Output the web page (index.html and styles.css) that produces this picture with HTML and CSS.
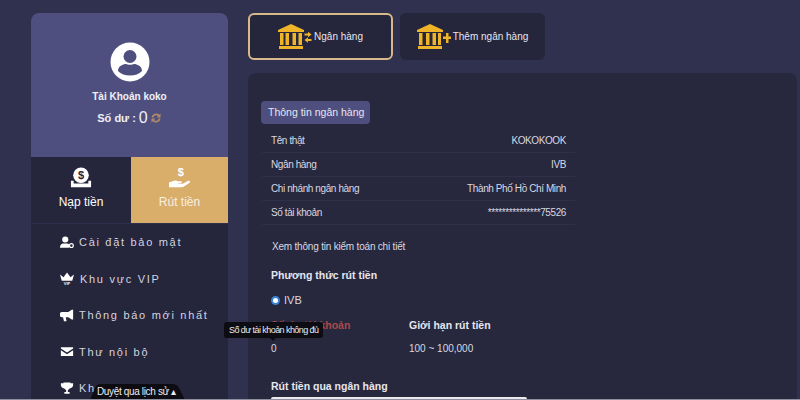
FILE: index.html
```html
<!DOCTYPE html>
<html lang="en">
<head>
    <meta charset="UTF-8">
    <meta name="viewport" content="width=device-width, initial-scale=1.0">
    <title>Rút tiền</title>
    <link rel="stylesheet" href="styles.css">
</head>
<body>
    <div class="page">
        <!-- Left column -->
        <aside class="sidebar">
            <div class="profile">
                <svg class="avatar" viewBox="0 0 40 40">
                    <circle cx="20" cy="20" r="19.500" fill="#fff"/>
                    <circle cx="20" cy="14.500" r="6.500" fill="#4f4f7f"/>
                    <path d="M8 29c0-5 5-7 8-7 1.500 1 6.500 1 8 0 3 0 8 2 8 7-3 3-7 4.500-12 4.500S11 32 8 29z" fill="#4f4f7f"/>
                </svg>
                <div class="profile-name">Tài Khoản koko</div>
                <div class="balance">Số dư : <span class="balance-num">0</span>
                    <svg class="refresh" viewBox="0 0 12 12">
                        <path d="M1.500 5.500a4.500 4.500 0 0 1 7.700-2.700L10.500 1.500v4h-4L8 4a2.600 2.600 0 0 0-4.500 1.500zM10.500 6.500a4.500 4.500 0 0 1-7.700 2.700L1.500 10.500v-4h4L4 8a2.600 2.600 0 0 0 4.500-1.500z" fill="#b08a68"/>
                    </svg>
                </div>
            </div>
            <div class="money-tabs">
                <div class="money-tab">
                    <svg class="money-icon" viewBox="0 0 24 24">
                        <circle cx="12" cy="9" r="8.500" fill="#fff"/>
                        <path d="M1 15h3v3h16v-3h3v7H1z" fill="#fff"/>
                        <text x="12" y="13.500" class="money-sign money-sign-dark">$</text>
                    </svg>
                    <span>Nạp tiền</span>
                </div>
                <div class="money-tab money-tab-active">
                    <svg class="money-icon" viewBox="0 0 24 24">
                        <text x="13" y="10" class="money-sign">$</text>
                        <path d="M0 22v-5l4-1.500c2-1 4-1 5.500 0H13c1.300 0 1.300 2.300 0 2.300h-3v.5h5l6-3.300c1.600-.6 2.800 1 1.500 2.200L16 21.500c-.6.300-1.200.5-2 .5z" fill="#fff"/>
                    </svg>
                    <span>Rút tiền</span>
                </div>
            </div>
            <nav class="menu">
                <div class="menu-item">
                    <svg class="menu-icon" viewBox="0 0 16 14">
                        <circle cx="6" cy="3.500" r="3.500" fill="#fff"/>
                        <path d="M0 13c0-4 2-5 4-5h4c1 0 2 .5 2.500 1.500V13z" fill="#fff"/>
                        <circle cx="13" cy="10.500" r="2.200" fill="none" stroke="#fff" stroke-width="1.400"/>
                    </svg>
                    <span>Cài đặt bảo mật</span>
                </div>
                <div class="menu-item menu-item-wide">
                    <svg class="menu-icon" viewBox="0 0 16 14">
                        <path d="M0 2.500l4 3L8 0l4 5.500 4-3-2 7H2z" fill="#fff"/>
                        <text x="8" y="14" class="vip-mark">VIP</text>
                    </svg>
                    <span>Khu vực VIP</span>
                </div>
                <div class="menu-item">
                    <svg class="menu-icon" viewBox="0 0 16 14">
                        <path d="M13.500 .5H15v11h-1.500L9.500 9H6.500l1 4.500H4.500L3.500 9H2.500a2.800 2.800 0 0 1 0-6h7z" fill="#fff"/>
                    </svg>
                    <span>Thông báo mới nhất</span>
                </div>
                <div class="menu-item">
                    <svg class="menu-icon" viewBox="0 0 16 14">
                        <path d="M1 2h14v1.500L8 8 1 3.500zM1 5.500L8 10l7-4.500V12H1z" fill="#fff"/>
                    </svg>
                    <span>Thư nội bộ</span>
                </div>
                <div class="menu-item">
                    <svg class="menu-icon" viewBox="0 0 16 14">
                        <path d="M4 0h8v1h3v2c0 2-1.500 3.500-4 4-.5 1-1.500 1.500-2 1.800V11h2v2H5v-2h2V8.800C6.500 8.500 5.500 8 5 7 2.500 6.500 1 5 1 3V1h3z" fill="#fff"/>
                    </svg>
                    <span>Khu</span>
                </div>
            </nav>
        </aside>

        <!-- Right column -->
        <main class="content">
            <div class="bank-tabs">
                <div class="bank-tab bank-tab-active">
                    <svg class="bank-icon" viewBox="0 0 34 26">
                        <path d="M13 0l13 6v2H0V6z" fill="#f0b429"/>
                        <path d="M2 9h3.500v12H2zM7.500 9H11v12H7.500zM14.500 9H18v12h-3.500zM20.500 9H24v12h-3.500z" fill="#f0b429"/>
                        <rect x="1" y="22" width="24" height="3" fill="#f0b429"/>
                        <path d="M26.500 9.500h3.500V7.700l3.500 2.800-3.500 2.800v-1.800h-3.500zM33.500 15h-3.500v-1.800L26.500 16l3.500 2.800V17h3.500z" fill="#f0b429"/>
                    </svg>
                    <span>Ngân hàng</span>
                </div>
                <div class="bank-tab">
                    <svg class="bank-icon" viewBox="0 0 34 26">
                        <path d="M13 0l13 6v2H0V6z" fill="#f0b429"/>
                        <path d="M2 9h3.500v12H2zM9 9h3.500v12H9zM15.500 9H19v12h-3.500zM21 9h3v12h-3z" fill="#f0b429"/>
                        <rect x="1" y="22" width="24" height="3" fill="#f0b429"/>
                        <path d="M26 12.500h3V9h2.500v3.500H34V15h-2.500v4H29v-4h-3z" fill="#f0b429"/>
                    </svg>
                    <span>Thêm ngân hàng</span>
                </div>
            </div>

            <section class="panel">
                <div class="panel-badge">Thông tin ngân hàng</div>
                <div class="info-table">
                    <div class="info-row"><span>Tên thật</span><span>KOKOKOOK</span></div>
                    <div class="info-row"><span>Ngân hàng</span><span>IVB</span></div>
                    <div class="info-row"><span>Chi nhánh ngân hàng</span><span>Thành Phố Hồ Chí Minh</span></div>
                    <div class="info-row"><span>Số tài khoản</span><span>***************75526</span></div>
                </div>
                <p class="audit-link">Xem thông tin kiểm toán chi tiết</p>
                <h3 class="section-title">Phương thức rút tiền</h3>
                <label class="radio-row"><span class="radio-dot"></span>IVB</label>
                <div class="limits">
                    <div class="limit-col">
                        <h3 class="limit-title limit-title-red">Số dư tài khoản</h3>
                        <div class="limit-value">0</div>
                        <div class="tooltip">Số dư tài khoản không đủ</div>
                    </div>
                    <div class="limit-col">
                        <h3 class="limit-title">Giới hạn rút tiền</h3>
                        <div class="limit-value">100 ~ 100,000</div>
                    </div>
                </div>
                <h3 class="section-title section-title-last">Rút tiền qua ngân hàng</h3>
                <div class="amount-input"></div>
            </section>
        </main>
    </div>

    <div class="history-tab">Duyệt qua lịch sử ▴</div>
</body>
</html>
```

FILE: styles.css
```css
/* General Reset */
html, body {
    margin: 0;
    padding: 0;
    width: 800px;
    height: 400px;
    overflow: hidden;
    font-family: "Liberation Sans", Arial, sans-serif;
    color: #ffffff;
    background: #30314f;
}

/* Light strip along the bottom edge of the window */
body::after {
    content: "";
    position: absolute;
    left: 0;
    bottom: 0;
    width: 800px;
    height: 1px;
    background: #8e90a0;
}

.page {
    display: flex;
    align-items: flex-start;
    gap: 20px;
    padding: 13px 0 0 31px;
}

/* Sidebar */
.sidebar {
    width: 197px;
    flex-shrink: 0;
    background: #25253b;
    border-radius: 8px 8px 0 0;
    height: 387px;
    overflow: hidden;
}

.profile {
    height: 144px;
    background: #4f4f7f;
    display: flex;
    flex-direction: column;
    align-items: center;
    box-sizing: border-box;
    padding-top: 29px;
}

.avatar {
    width: 40px;
    height: 40px;
}

.profile-name {
    font-size: 10px;
    font-weight: bold;
    margin-top: 9px;
    color: #f0f0f5;
}

.balance {
    font-size: 11px;
    font-weight: bold;
    margin-top: 7px;
    display: flex;
    align-items: center;
    gap: 3px;
    color: #f0f0f5;
}

.balance-num {
    font-size: 16px;
    font-weight: normal;
}

.refresh {
    width: 12px;
    height: 12px;
    margin-left: -1px;
}

.money-tabs {
    display: flex;
    height: 66px;
    border-bottom: 1px solid #2e2f4d;
}

.money-tab {
    width: 100px;
    display: flex;
    flex-direction: column;
    align-items: center;
    font-size: 12px;
    padding-top: 10px;
    box-sizing: border-box;
    gap: 6px;
}

.money-tab-active {
    width: 97px;
    background: #d9ae6b;
    color: #f7efe0;
}

.money-icon {
    width: 22px;
    height: 22px;
}

.money-sign {
    font-size: 12px;
    font-weight: bold;
    text-anchor: middle;
    fill: #fff;
}

.money-sign-dark {
    fill: #25253b;
}

/* Menu */
.menu {
    display: flex;
    flex-direction: column;
    gap: 18.600px;
    padding: 9px 0 0 29px;
}

.menu-item {
    display: flex;
    align-items: center;
    gap: 5px;
    height: 18px;
    font-size: 11px;
    letter-spacing: 1.700px;
    color: #d4d4e0;
}

.menu-item-wide {
    gap: 6px;
}

.menu-icon {
    width: 14px;
    height: 13px;
}

.vip-mark {
    font-size: 4.500px;
    font-weight: bold;
    text-anchor: middle;
    letter-spacing: 0;
    fill: #fff;
}

/* Main content */
.content {
    width: 549px;
    flex-shrink: 0;
}

.bank-tabs {
    display: flex;
    gap: 7px;
}

.bank-tab {
    width: 145px;
    height: 47px;
    box-sizing: border-box;
    background: #25253b;
    border-radius: 6px;
    display: flex;
    align-items: center;
    justify-content: center;
    gap: 2px;
    font-size: 10px;
    color: #e6e6ee;
}

.bank-tab-active {
    border: 2px solid #d8b98c;
}

.bank-icon {
    width: 34px;
    height: 26px;
}

.panel {
    margin-top: 13px;
    height: 340px;
    background: #27283e;
    border-radius: 8px 8px 0 0;
    padding: 28px 14px 0;
    box-sizing: border-box;
}

.panel-badge {
    display: inline-block;
    background: #4f4f7f;
    border-radius: 4px;
    margin-left: -1px;
    padding: 0 6px 0 7px;
    height: 23px;
    line-height: 23px;
    font-size: 10.500px;
    color: #e6e6ee;
}

.info-table {
    width: 313px;
    margin-top: 5px;
}

.info-row {
    display: flex;
    justify-content: space-between;
    height: 24px;
    line-height: 23px;
    padding: 0 9px;
    font-size: 10px;
    letter-spacing: -0.400px;
    color: #d8d8e2;
    border-bottom: 1px solid #2f2f49;
    box-sizing: border-box;
}

.audit-link {
    font-size: 10px;
    letter-spacing: -0.200px;
    color: #d8d8e2;
    margin: 16px 0 0 10px;
    line-height: 12px;
}

.section-title {
    font-size: 10.500px;
    font-weight: bold;
    color: #e6e6ee;
    margin: 16px 0 0 9px;
    line-height: 13px;
}

.radio-row {
    display: flex;
    align-items: center;
    gap: 4px;
    font-size: 11px;
    color: #d8d8e2;
    margin: 12px 0 0 9px;
    line-height: 13px;
}

.radio-dot {
    width: 5px;
    height: 5px;
    background: #ffffff;
    border: 2px solid #3b82d6;
    border-radius: 50%;
}

.limits {
    display: flex;
    margin: 12px 0 0 9px;
}

.limit-col {
    width: 138px;
    position: relative;
}

.limit-title {
    font-size: 10.500px;
    font-weight: bold;
    margin: 0;
    line-height: 13px;
    color: #e6e6ee;
}

.limit-title-red {
    color: #a84a4a;
}

.limit-value {
    font-size: 10px;
    color: #d8d8e2;
    margin-top: 11px;
    line-height: 12px;
}

/* Tooltip lies over the balance heading */
.tooltip {
    position: absolute;
    left: -47px;
    top: 3px;
    background: #0c0c12;
    border-radius: 3px;
    padding: 0 5px;
    height: 16px;
    line-height: 16px;
    font-size: 9px;
    letter-spacing: -0.570px;
    white-space: nowrap;
    color: #ececf2;
}

.tooltip::after {
    content: "";
    position: absolute;
    left: 46px;
    bottom: -3px;
    border-left: 3px solid transparent;
    border-right: 3px solid transparent;
    border-top: 3px solid #0c0c12;
}

.section-title-last {
    margin-top: 25px;
}

.amount-input {
    width: 256px;
    height: 20px;
    margin: 4px 0 0 9px;
    background: #e9e9ee;
    border-radius: 2px;
}

/* History pull-up tab */
.history-tab {
    position: absolute;
    left: 90px;
    top: 384px;
    width: 95px;
    height: 16px;
    line-height: 15px;
    box-sizing: border-box;
    padding-left: 7px;
    background: #0c0c12;
    clip-path: polygon(0 100%, 6px 2px, 9px 0, 84px 0, 88px 2px, 100% 100%);
    font-size: 10px;
    letter-spacing: -0.350px;
    color: #ececf2;
    white-space: nowrap;
}
```
